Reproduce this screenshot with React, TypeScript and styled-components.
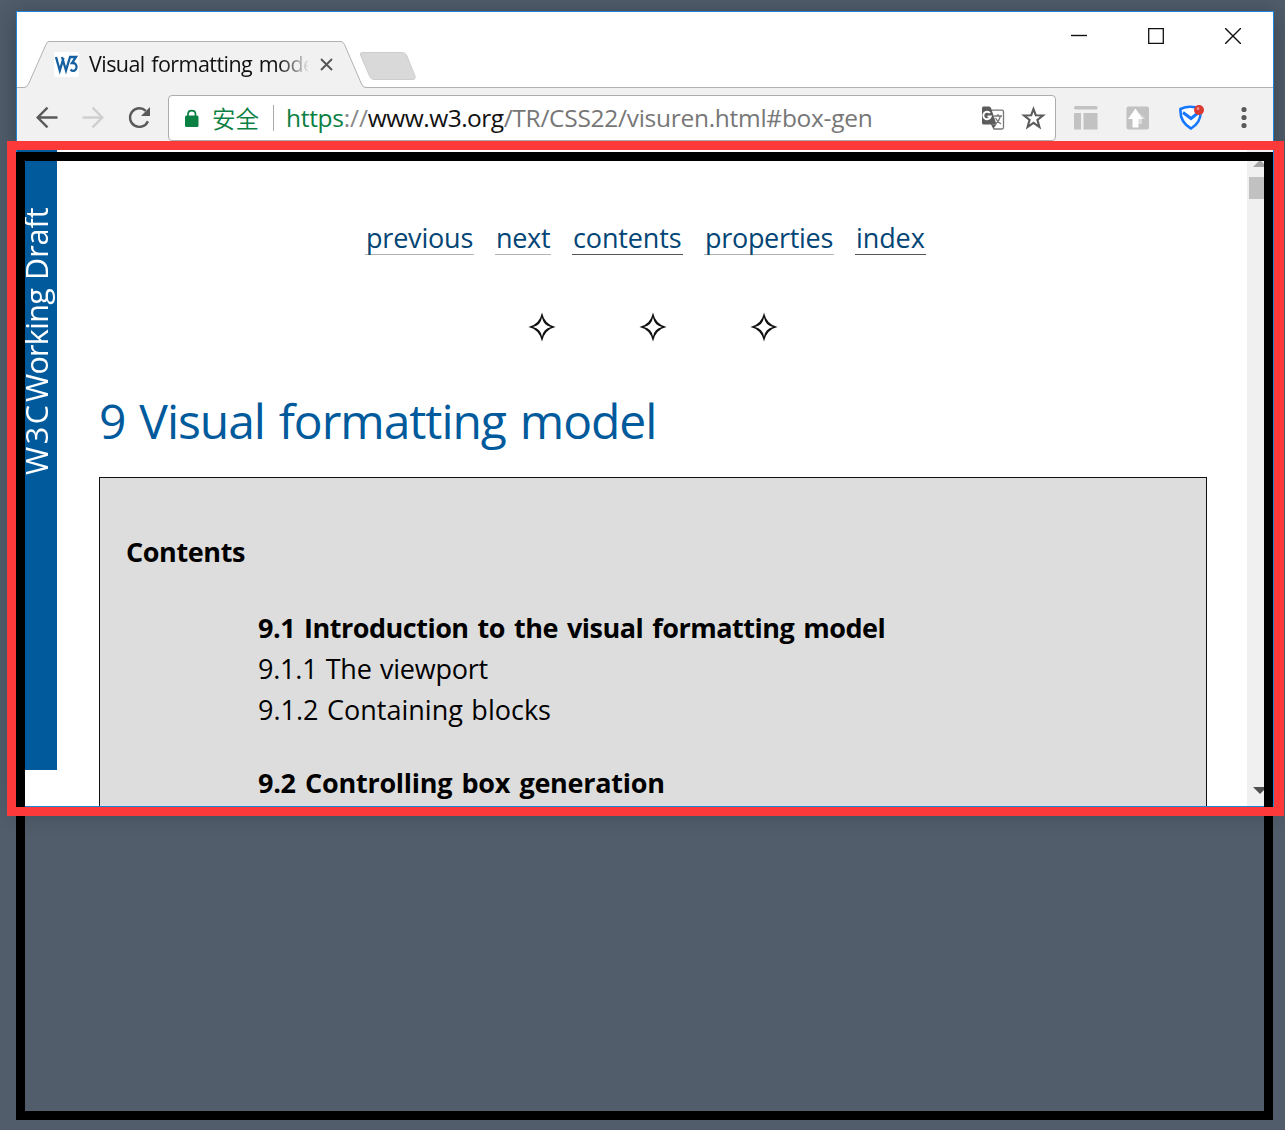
import React from 'react';
import styled, { createGlobalStyle } from 'styled-components';

const Global = createGlobalStyle`
  * { box-sizing: border-box; }
  body { margin: 0; background: #515d6a; overflow: hidden; }
`;

const Desktop = styled.main`
  position: relative;
  width: 1285px;
  height: 1130px;
  padding: 11px 11px 0 16px;
  overflow: hidden;
  background: #515d6a;
  font-family: "Open Sans", "Noto Sans CJK SC", sans-serif;
`;

const BrowserWindow = styled.section`
  display: flex;
  flex-direction: column;
  width: 1258px;
  height: 796px;
  border: 1px solid #1f83d8;
  background: #fff;
  box-shadow: 0 3px 22px rgba(20, 25, 40, 0.4);
`;

const TitleBar = styled.header`
  display: flex;
  justify-content: space-between;
  flex: none;
  height: 75px;
`;

const TabStrip = styled.div`
  position: relative;
  display: flex;
  width: 420px;
  padding: 40px 0 0 37px;
`;

const TabShape = styled.svg`
  position: absolute;
  left: 0;
  top: 0;
`;

const TabContent = styled.div`
  position: relative;
  display: flex;
  align-items: center;
  height: 24px;
`;

const Favicon = styled.span`
  display: flex;
  align-items: center;
  justify-content: center;
  width: 25px;
  height: 25px;
  border-radius: 2px;
  background: #fff;
`;

const TabTitle = styled.span`
  width: 219px;
  margin-left: 10px;
  overflow: hidden;
  white-space: nowrap;
  font-size: 21.5px;
  line-height: 30px;
  letter-spacing: -0.55px;
  word-spacing: 1.5px;
  color: #111;
  mask-image: linear-gradient(90deg, #000 190px, transparent 221px);
`;

const WindowButtons = styled.div`
  display: flex;
  gap: 61px;
  padding: 16px 32px 0 0;
  height: 33px;
`;

const Toolbar = styled.nav`
  display: flex;
  align-items: center;
  flex: none;
  height: 63px;
  padding: 0 17px 3px 18px;
  border-top: 1px solid #b2b2b2;
  background: #f1f1f1;
`;

const NavButtons = styled.div`
  display: flex;
  gap: 22px;
  width: 133px;
`;

const AddressBar = styled.div`
  display: flex;
  align-items: center;
  width: 888px;
  height: 46px;
  padding: 0 9px 0 16px;
  border: 1px solid #adadad;
  border-radius: 4px;
  background: #fff;
`;

const Secure = styled.span`
  width: 62px;
  margin-left: 13px;
  border-right: 1px solid #aaa;
  font: 350 23.5px/26px "Noto Sans CJK SC", sans-serif;
  color: #0b8043;
`;

const Url = styled.span`
  flex: 1;
  margin-left: 12px;
  white-space: nowrap;
  font-size: 24.5px;
  line-height: 34px;
`;

const UrlPart = styled.span<{ $color: string; $track: number }>`
  color: ${p => p.$color};
  letter-spacing: ${p => p.$track}px;
`;

const AddressActions = styled.div`
  display: flex;
  gap: 16px;
`;

const Extensions = styled.div`
  display: flex;
  align-items: center;
  justify-content: space-between;
  flex: 1;
  margin-left: 18px;
`;

const Viewport = styled.div`
  display: flex;
  flex: 1;
  min-height: 0;
  overflow: hidden;
`;

const DraftBanner = styled.aside`
  display: flex;
  align-items: center;
  justify-content: flex-end;
  flex: none;
  width: 40px;
  height: 620px;
  padding: 0 0 57px 1px;
  writing-mode: vertical-rl;
  transform: rotate(180deg);
  background: #005a9c;
  color: #fff;
  font: 30.5px/37px "Open Sans", sans-serif;
`;

const DraftWord = styled.span<{ $track: number; $gap: number }>`
  letter-spacing: ${p => p.$track}px;
  margin-bottom: ${p => p.$gap}px;
  white-space: nowrap;
`;

const Page = styled.article`
  flex: 1;
  padding: 65px 40px 0 42px;
  color: #000;
`;

const Links = styled.nav`
  display: flex;
  height: 40px;
  padding-left: 266px;
  gap: 21px;
`;

const PageLink = styled.a<{ $width: number; $track: number; $line: string }>`
  width: ${p => p.$width}px;
  height: 40px;
  padding-left: 1px;
  border-bottom: 1px solid ${p => p.$line};
  font-size: 27px;
  line-height: 46px;
  letter-spacing: ${p => p.$track}px;
  color: #034575;
  white-space: nowrap;
`;

const Stars = styled.div`
  display: flex;
  gap: 81px;
  padding-left: 428px;
  margin-top: 56px;
  height: 32px;
`;

const Heading = styled.h1`
  margin: 40px 0 0;
  height: 76px;
  font-size: 48px;
  font-weight: 400;
  line-height: 75px;
  letter-spacing: -1.05px;
  word-spacing: 2.5px;
  white-space: nowrap;
  color: #005a9c;
`;

const Toc = styled.section`
  margin-top: 18px;
  height: 500px;
  padding: 53px 0 0 26px;
  border: 1px solid #111;
  background: #ddd;
`;

const TocTitle = styled.h2`
  margin: 0;
  font-size: 27px;
  line-height: 41px;
  font-weight: 700;
  letter-spacing: -0.4px;
`;

const TocList = styled.ul`
  margin: 35px 0 0 132px;
  padding: 0;
  list-style: none;
`;

const TocItem = styled.li<{ $bold?: boolean; $gap?: number; $track: number }>`
  margin-top: ${p => p.$gap ?? 0}px;
  font-size: 27px;
  line-height: 41px;
  font-weight: ${p => (p.$bold ? 700 : 400)};
  letter-spacing: ${p => p.$track}px;
  word-spacing: ${p => (p.$bold ? 2.5 : 1.5)}px;
  white-space: nowrap;
`;

const Scrollbar = styled.div`
  display: flex;
  flex-direction: column;
  align-items: center;
  width: 26px;
  padding: 9px 0 11px;
  background: #f0f0f0;
`;

const Thumb = styled.div`
  width: 22px;
  height: 22px;
  margin: 10px 0 auto;
  background: #c1c1c1;
`;

const BlackFrame = styled.div`
  position: absolute;
  left: 16px;
  top: 152px;
  width: 1257px;
  height: 968px;
  border: 9px solid #000;
`;

const RedFrame = styled.div`
  position: absolute;
  left: 7px;
  top: 141px;
  width: 1277px;
  height: 675px;
  border: 9px solid #fd3939;
  border-right-width: 10px;
`;

const links = [
  { text: 'previous', width: 109, track: -0.2, line: '#b3b3b3' },
  { text: 'next', width: 56, track: -0.3, line: '#b3b3b3' },
  { text: 'contents', width: 111, track: -0.15, line: '#555' },
  { text: 'properties', width: 130, track: -0.3, line: '#b3b3b3' },
  { text: 'index', width: 71, track: -0.1, line: '#555' },
];

const toc = [
  { text: '9.1 Introduction to the visual formatting model', bold: true, track: -0.5 },
  { text: '9.1.1 The viewport', track: -0.22 },
  { text: '9.1.2 Containing blocks', track: 0 },
  { text: '9.2 Controlling box generation', bold: true, gap: 32, track: -0.26 },
];

const Star = () => (
  <svg width="30" height="32" viewBox="0 0 30 32">
    <path
      fillRule="evenodd"
      fill="#111"
      d="M15 1.500Q17.500 13.500 28.500 16Q17.500 18.500 15 30.500Q12.500 18.500 1.500 16Q12.500 13.500 15 1.500Z M15 6.500Q13.500 14.500 6 16Q13.500 17.500 15 25.500Q16.500 17.500 24 16Q16.500 14.500 15 6.500Z"
    />
  </svg>
);

const W3Icon = () => (
  <svg width="25" height="25" viewBox="0 0 25 25" fill="none" stroke="#1560a0" strokeWidth="2.300">
    <path d="M2 5 5.800 18.500 9.500 6M8 5 12 18.500 16 5" />
    <path d="M15 5H22L18 11C21 10.800 22.800 12.500 22.500 15.500C22.200 18.500 19.200 20 16.500 17.600" />
  </svg>
);

export default function App() {
  return (
    <Desktop>
      <Global />
      <BrowserWindow>
        <TitleBar>
          <TabStrip>
            <TabShape width="420" height="77" viewBox="0 0 420 77">
              <path
                d="M0 75.500H7Q10 75.500 11.500 72L29 32.500Q30 29.500 32 29.500H324Q326 29.500 327.500 32.500L344.500 72Q346 75.500 349 75.500H420V77H0Z"
                fill="#f1f1f1"
              />
              <path
                d="M0 75.500H7Q10 75.500 11.500 72L29 32.500Q30 29.500 32 29.500H324Q326 29.500 327.500 32.500L344.500 72Q346 75.500 349 75.500H420"
                fill="none"
                stroke="#b2b2b2"
              />
              <path
                d="M345 40.500H385Q388 40.500 389.500 43L398 64Q399 67.500 396 67.500H357Q354 67.500 352.500 64L343.500 43Q343 40.500 345 40.500Z"
                fill="#d9d9d9"
                stroke="#cdcdcd"
              />
            </TabShape>
            <TabContent>
              <Favicon><W3Icon /></Favicon>
              <TabTitle>Visual formatting model</TabTitle>
              <svg width="13" height="13" viewBox="0 0 13 13" style={{ marginLeft: 12 }} stroke="#555" strokeWidth="1.9">
                <path d="M1 1 12 12M12 1 1 12" />
              </svg>
            </TabContent>
          </TabStrip>
          <WindowButtons>
            <svg width="16" height="16"><path d="M0 7.500H16" stroke="#111" strokeWidth="1.400" /></svg>
            <svg width="16" height="16"><path d="M.7.700H15.300V15.300H.7Z" fill="none" stroke="#111" strokeWidth="1.300" /></svg>
            <svg width="16" height="16"><path d="M0 0 16 16M16 0 0 16" stroke="#111" strokeWidth="1.400" /></svg>
          </WindowButtons>
        </TitleBar>
        <Toolbar>
          <NavButtons>
            <svg width="24" height="24" viewBox="0 0 24 24" fill="none" stroke="#5a5a5a" strokeWidth="2.400">
              <path d="M22.500 11.500H2.800M12.500 1.700 2.700 11.500 12.500 21.300" />
            </svg>
            <svg width="24" height="24" viewBox="0 0 24 24" fill="none" stroke="#cfcfcf" strokeWidth="2.400">
              <path d="M1.500 11.500H21.200M11.500 1.700 21.300 11.500 11.500 21.300" />
            </svg>
            <svg width="24" height="24" viewBox="0 0 24 24" fill="none" stroke="#5a5a5a" strokeWidth="2.400">
              <path d="M20.900 15.200A9.300 9.300 0 1 1 18.800 4.900" />
              <path d="M23 1V10H14Z" fill="#5a5a5a" stroke="none" />
            </svg>
          </NavButtons>
          <AddressBar>
            <svg width="14" height="20" viewBox="0 0 14 20">
              <rect y="7.500" width="13.500" height="11.500" rx="1.500" fill="#0b8043" />
              <path d="M3 8V6C3 1.500 10.500 1.500 10.500 6V8" fill="none" stroke="#0b8043" strokeWidth="1.700" />
            </svg>
            <Secure>安全</Secure>
            <Url>
              <UrlPart $color="#0b8043" $track={-0.3}>https</UrlPart>
              <UrlPart $color="#888" $track={-0.1}>://</UrlPart>
              <UrlPart $color="#111" $track={-0.5}>www.w3.org</UrlPart>
              <UrlPart $color="#777" $track={-0.28}>/TR/CSS22/visuren.html#box-gen</UrlPart>
            </Url>
            <AddressActions>
              <svg width="25" height="25" viewBox="0 0 25 25">
                <path d="M11 5.200H22Q23.500 5.200 23.500 6.500V22.500Q23.500 24 22 24H14L11 18" fill="#fff" stroke="#777" strokeWidth="1.300" />
                <path d="M3.500 1.500H9Q10.500 1.500 11 3L16.500 19.500H3.500Q2 19.500 2 18V3Q2 1.500 3.500 1.500Z" fill="#5c5c5c" />
                <path d="M11.500 19.500H16.500L13.500 23.500Z" fill="#5c5c5c" />
                <path d="M10 8A3.800 3.800 0 1 0 10.800 11.500H7.500" fill="none" stroke="#fff" strokeWidth="1.900" />
                <path d="M14 11H22M18 9V11M20.500 11Q19.500 15.500 15.500 19M15.500 13Q17.500 17 21 19" fill="none" stroke="#777" strokeWidth="1.300" />
              </svg>
              <svg width="25" height="25" viewBox="0 0 25 25">
                <path d="M12.500 4 14.800 10.200 22 10.500 16.400 14.900 18.400 22 12.500 17.900 6.600 22 8.600 14.900 3 10.500 10.200 10.200Z" fill="none" stroke="#5a5a5a" strokeWidth="2.100" />
              </svg>
            </AddressActions>
          </AddressBar>
          <Extensions>
            <svg width="24" height="25" viewBox="0 0 24 25" fill="#c2c2c2">
              <rect y="1" width="23.500" height="3.500" rx="1.500" />
              <rect y="8" width="7" height="16.500" />
              <rect x="9.500" y="8" width="14" height="16.500" />
            </svg>
            <svg width="23" height="24" viewBox="0 0 23 24">
              <rect x=".5" y=".5" width="22.500" height="23" rx="2" fill="#c2c2c2" />
              <path d="M13 7 19.500 13H16V18H11Z" fill="#dcdcdc" />
              <path d="M9.500 2.500 16.500 13H12.500V21.500H6.500V13H2Z" fill="#fff" />
            </svg>
            <svg width="26" height="26" viewBox="0 0 26 26">
              <path d="M2.500 4Q12 -.5 22.500 4Q24 17 13 23.500Q1.500 17 2.500 4Z" fill="#fff" stroke="#1677ff" strokeWidth="2.600" />
              <path d="M5 7.500 13 13.500 20.500 7.500" fill="none" stroke="#1677ff" strokeWidth="3" />
              <circle cx="21" cy="5" r="5" fill="#dc3932" />
              <circle cx="20" cy="3.500" r="1.500" fill="#ee8c86" />
            </svg>
            <svg width="24" height="24" viewBox="0 0 24 24" fill="#5a5a5a">
              <circle cx="12" cy="3.500" r="2.600" />
              <circle cx="12" cy="11.500" r="2.600" />
              <circle cx="12" cy="19.500" r="2.600" />
            </svg>
          </Extensions>
        </Toolbar>
        <Viewport>
          <DraftBanner>
            <DraftWord $track={2.6} $gap={1}>W3C</DraftWord>
            <DraftWord $track={-0.7} $gap={9}>Working</DraftWord>
            <DraftWord $track={0} $gap={0}>Draft</DraftWord>
          </DraftBanner>
          <Page>
            <Links>
              {links.map(l => (
                <PageLink key={l.text} $width={l.width} $track={l.track} $line={l.line}>{l.text}</PageLink>
              ))}
            </Links>
            <Stars><Star /><Star /><Star /></Stars>
            <Heading>9 Visual formatting model</Heading>
            <Toc>
              <TocTitle>Contents</TocTitle>
              <TocList>
                {toc.map(t => (
                  <TocItem key={t.text} $bold={t.bold} $gap={t.gap} $track={t.track}>{t.text}</TocItem>
                ))}
              </TocList>
            </Toc>
          </Page>
          <Scrollbar>
            <svg width="14" height="8"><path d="M7 1 14 8H0Z" fill="#a3a3a3" /></svg>
            <Thumb />
            <svg width="14" height="8"><path d="M0 0H14L7 7Z" fill="#505050" /></svg>
          </Scrollbar>
        </Viewport>
      </BrowserWindow>
      <BlackFrame />
      <RedFrame />
    </Desktop>
  );
}
